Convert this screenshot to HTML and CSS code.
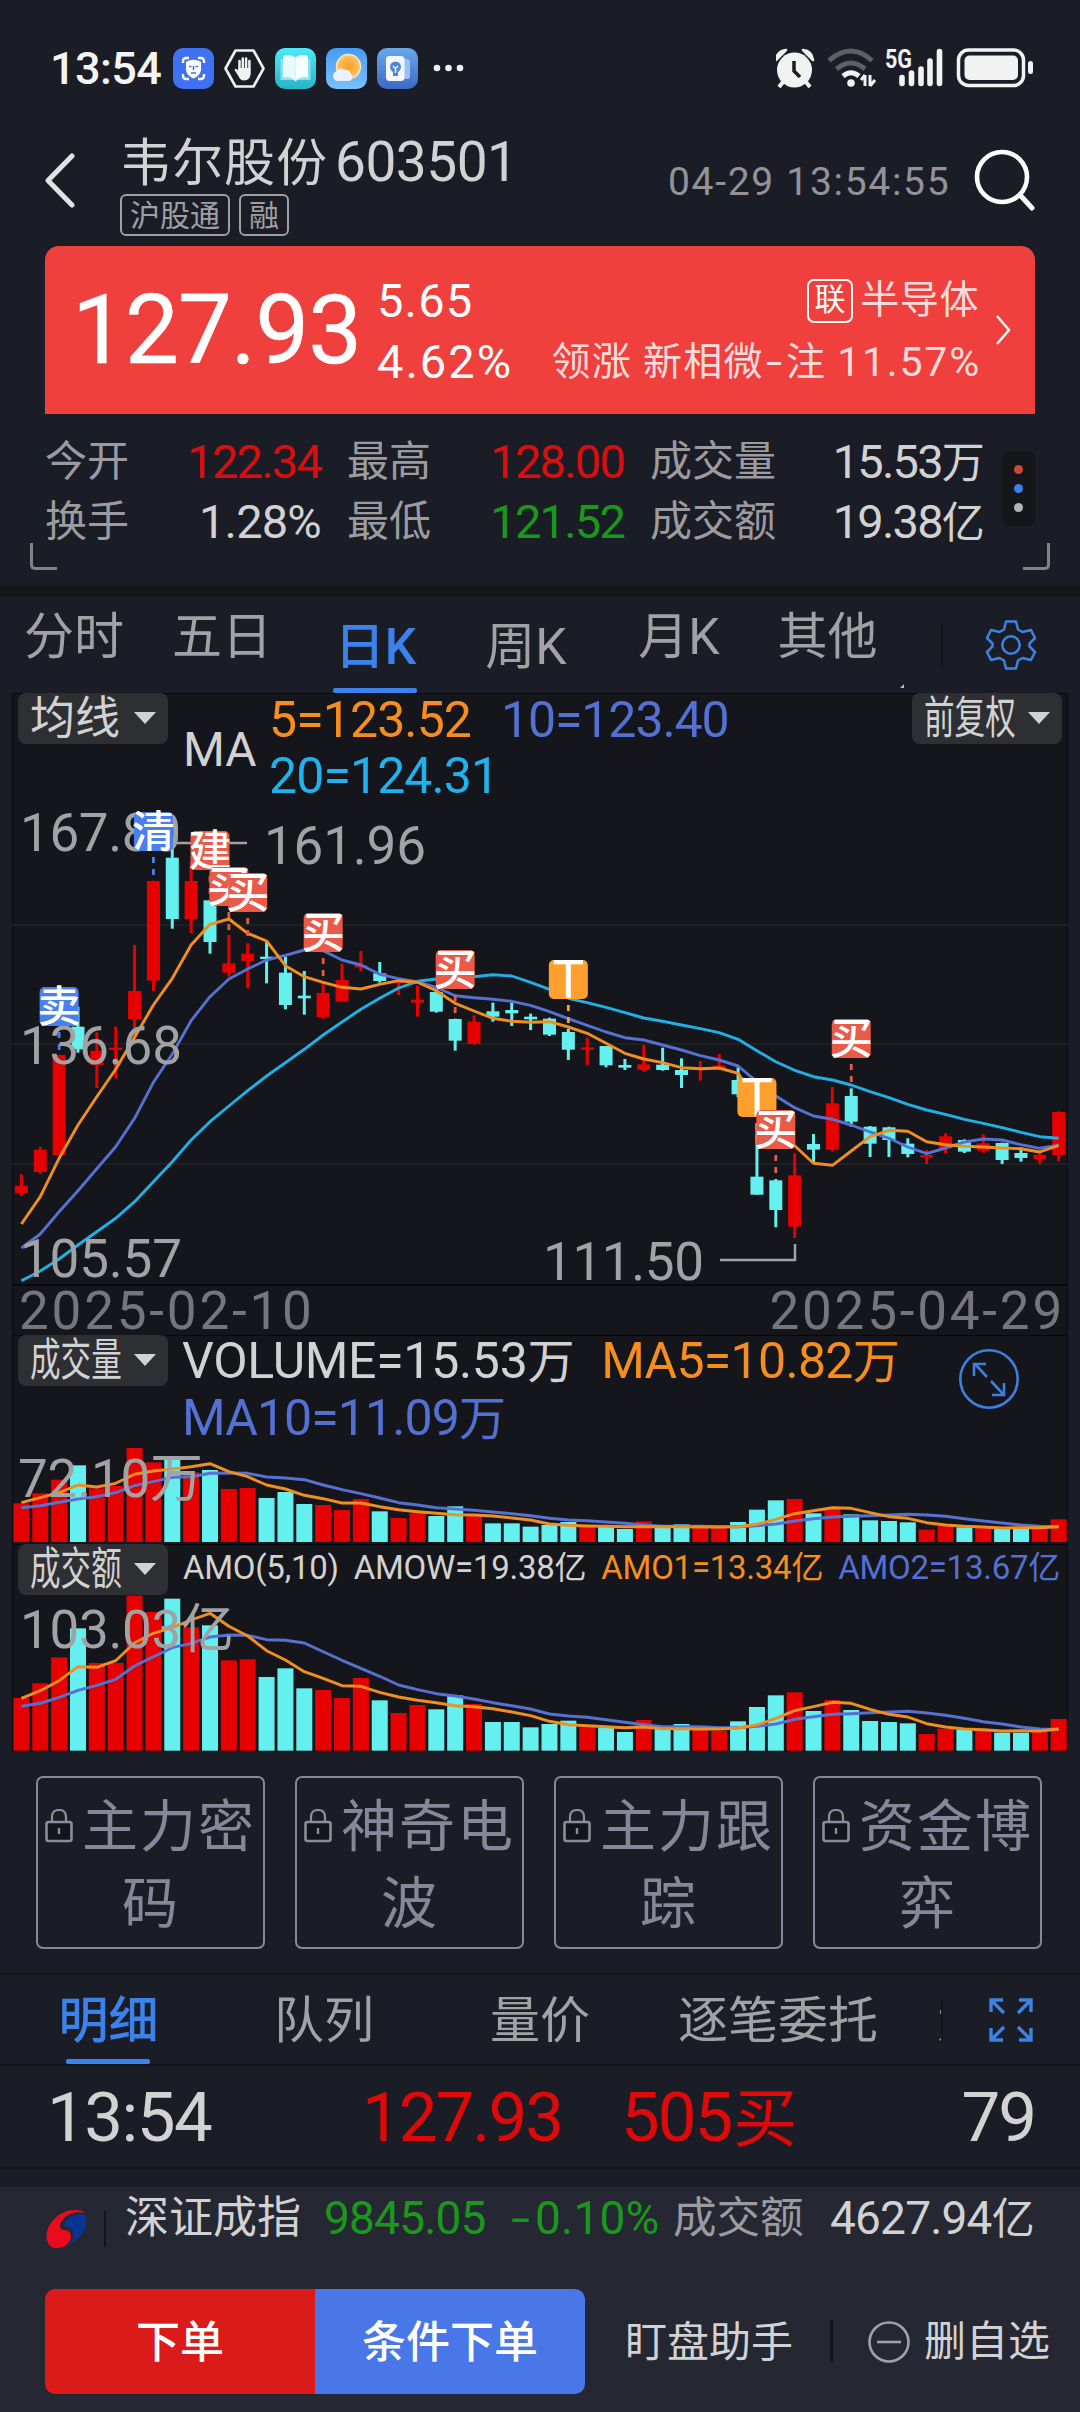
FILE: index.html
```html
<!DOCTYPE html>
<html lang="zh-CN">
<head>
<meta charset="utf-8">
<title>韦尔股份 603501</title>
<link rel="stylesheet" href="styles.css">
</head>
<body>
<div class="status">
  <span class="clock">13:54</span>
  <div class="apps">
    <svg viewBox="0 0 41 41"><rect width="41" height="41" rx="10" fill="#3f72f3"/><path d="M10 15v-2a3 3 0 0 1 3-3h3M25 10h3a3 3 0 0 1 3 3v2M31 26v2a3 3 0 0 1-3 3h-3M16 31h-3a3 3 0 0 1-3-3v-2" fill="none" stroke="#fff" stroke-width="2.4"/><path d="M13 14q7.500-4.500 15 0v8q-1 6-7.500 8.500q-6.500-2.500-7.500-8.500z" fill="#fff"/><path d="M16 18.500h2.500M22.500 18.500H25M20.500 18v4M18 25h5" stroke="#3f72f3" stroke-width="1.600"/></svg>
    <svg viewBox="0 0 41 41"><path d="M11.500 2.500h18L39.500 20.500 29.500 38.500h-18L1.500 20.500z" fill="none" stroke="#f2f2f2" stroke-width="2.600" stroke-linejoin="round"/><path d="M15.500 22V13M18.800 20V10.500M22.100 20V10.500M25.400 20V13" stroke="#f2f2f2" stroke-width="2.500" stroke-linecap="round"/><path d="M14.300 20h12.400v6q-1 6.500-6.500 6.500-4 0-5.500-4l-4.200-6.500q1-2.500 3.800.5z" fill="#f2f2f2"/></svg>
    <svg viewBox="0 0 41 41"><linearGradient id="gb" x2="0" y2="1"><stop stop-color="#4de9fa"/><stop offset="1" stop-color="#28b3c7"/></linearGradient><rect width="41" height="41" rx="10" fill="url(#gb)"/><path d="M5.500 11h30v21h-13l-2 2-2-2h-13z" fill="#8fe0ea"/><path d="M8 8q8-2.500 12.500 1.500V33Q16 28 8 29.500z" fill="#e6fbff"/><path d="M33 8q-8-2.500-12.500 1.500V33Q25 28 33 29.500z" fill="#f7ffff"/></svg>
    <svg viewBox="0 0 41 41"><linearGradient id="gw" x2="0" y2="1"><stop stop-color="#439cf5"/><stop offset="1" stop-color="#7cc0ff"/></linearGradient><radialGradient id="gs"><stop stop-color="#f89d22"/><stop offset="1" stop-color="#ffc768"/></radialGradient><rect width="41" height="41" rx="10" fill="url(#gw)"/><circle cx="22.500" cy="18.500" r="12" fill="url(#gs)" stroke="#ffe6bd" stroke-width="1.500"/><path d="M12 33a5 5 0 0 1-2-9.500 6 6 0 0 1 9-1.500 5.500 5.500 0 0 1 6 4 4 4 0 0 1-2 7z" fill="#eaf3ff"/></svg>
    <svg viewBox="0 0 41 41"><linearGradient id="gl" x2="0" y2="1"><stop stop-color="#68a9ea"/><stop offset="1" stop-color="#3c69c6"/></linearGradient><rect width="41" height="41" rx="10" fill="url(#gl)"/><path d="M27 11h3q3 0 3 3v14q0 3-3 3h-3z" fill="#9dc0ee"/><rect x="9" y="8" width="18.500" height="25" rx="3.500" fill="#f2f7ff"/><circle cx="18.500" cy="19" r="5.500" fill="#4f86d6"/><path d="M16 24h5v4h-5z" fill="#4f86d6"/><path d="M16 18l2.500 2.500L21 18M18.500 20.500V25" stroke="#f2f7ff" stroke-width="1.400" fill="none"/></svg>
  </div>
  <svg class="more" viewBox="0 0 32 8"><g fill="#eee"><circle cx="4" cy="4" r="3.300"/><circle cx="15.500" cy="4" r="3.300"/><circle cx="27" cy="4" r="3.300"/></g></svg>
  <svg class="signal" viewBox="776 47 258 42">
    <g fill="#f2f2f2"><circle cx="794.500" cy="70" r="17.500"/><path d="M776 60q1-9 10-10zM813 60q-1-9-10-10z" stroke="#f2f2f2" stroke-width="2.500" stroke-linejoin="round"/><path d="M783 82l-4 5M806 82l4 5" stroke="#f2f2f2" stroke-width="4"/></g>
    <path d="M794 61v10l6 6" fill="none" stroke="#1b1d26" stroke-width="3.500"/>
    <g fill="none" stroke-width="5"><path d="M829 60.500q22-19 43 0M836.500 69q14.500-12 28.500 0" stroke="#5e6067"/><path d="M843 76q8-6.500 16 0" stroke="#f2f2f2"/></g>
    <circle cx="851" cy="83" r="3.800" fill="#f2f2f2"/><path d="M865 75v11M870 75v11M865 75l-4 5M870 86l5-6" stroke="#f2f2f2" stroke-width="3" fill="none"/>
    <text x="885" y="67.500" textLength="27" lengthAdjust="spacingAndGlyphs" class="net">5G</text>
    <path d="M902 83.500v-6M911.500 83.500V73M921 83.500V69M930 83.500V61M939.500 83.500V51.500" stroke="#f2f2f2" stroke-width="5.600" stroke-linecap="round"/>
    <rect x="958.500" y="50" width="65" height="35.500" rx="10" fill="none" stroke="#f2f2f2" stroke-width="3.500"/><rect x="964.500" y="55.500" width="53.500" height="24.500" rx="5" fill="#f2f2f2"/><rect x="1028" y="61" width="5" height="13" rx="2.500" fill="#f2f2f2"/>
  </svg>
</div>

<header class="head">
  <svg class="back" viewBox="0 0 34 56"><path d="M28 4L4 28.500 28 53" fill="none" stroke="#e2e2e2" stroke-width="5" stroke-linecap="round" stroke-linejoin="round"/></svg>
  <div class="name">
    <h1>韦尔股份<span>603501</span></h1>
    <div class="tags"><span>沪股通</span><span>融</span></div>
  </div>
  <time>04-29 13:54:55</time>
  <svg class="search" viewBox="0 0 62 64"><circle cx="29" cy="29" r="25" fill="none" stroke="#fff" stroke-width="4.600"/><path d="M47 47l12 13" stroke="#fff" stroke-width="5" stroke-linecap="round"/></svg>
</header>

<section class="quote">
  <strong>127.93</strong>
  <div class="chg"><span>5.65</span><span class="pct">4.62%</span></div>
  <div class="sector">
    <div><b>联</b>半导体</div>
    <div class="lead">领涨 新相微<i>-</i>注 <em>11.57%</em></div>
  </div>
  <svg class="go" viewBox="0 0 16 32"><path d="M2 2l12 14L2 30" fill="none" stroke="#fff" stroke-width="2.400"/></svg>
</section>

<section class="stats">
  <div class="grid">
    <label>今开</label><span class="up">122.34</span><label>最高</label><span class="up">128.00</span><label>成交量</label><span>15.53<i>万</i></span>
    <label>换手</label><span class="wide">1.28%</span><label>最低</label><span class="down">121.52</span><label>成交额</label><span>19.38<i>亿</i></span>
  </div>
  <div class="dots"><i></i><i></i><i></i></div>
  <span class="corner left"></span><span class="corner right"></span>
</section>

<nav class="periods">
  <a>分时</a><a>五日</a><a class="low on">日K</a><a class="low">周K</a><a>月K</a><a class="other">其他</a>
  <svg class="gear" viewBox="-26 -26 52 52"><path d="M-5-23.500H5L7-15.500 11.500-13 20-15 24-7 18.500-1.500V1.500L24 7 20 15 11.500 13 7 15.500 5 23.500H-5L-7 15.500-11.500 13-20 15-24 7-18.500 1.500V-1.500L-24-7-20-15-11.500-13-7-15.500Z" fill="none" stroke="#3e82e4" stroke-width="2.500" stroke-linejoin="round"/><circle r="8.700" fill="none" stroke="#3e82e4" stroke-width="2.500"/></svg>
</nav>

<main class="charts">
  <section class="pane price">
    <svg class="plot" id="price" viewBox="12 693 1056 591" preserveAspectRatio="none"></svg>
    <div class="legend">
      <button>均线</button>
      <span class="ma">MA</span>
      <p><span class="c5">5=123.52</span><span class="c10">10=123.40</span><br><span class="c20">20=124.31</span></p>
      <button class="tight adj"><u>前复权</u></button>
    </div>
  </section>
  <div class="dates"><span>2025-02-10</span><span>2025-04-29</span></div>
  <section class="pane volume">
    <svg class="plot" id="volume" viewBox="12 1335 1056 209" preserveAspectRatio="none"></svg>
    <div class="legend">
      <button class="tight"><u>成交量</u></button>
      <p><span class="total">VOLUME=15.53<i>万</i></span><span class="c5">MA5=10.82<i>万</i></span><br><span class="c10">MA10=11.09<i>万</i></span></p>
      <svg class="expand" viewBox="-31 -31 62 62"><g fill="none" stroke="#3e7fdd" stroke-width="2.600"><circle r="28.700"/><path d="M-2-2L-14-15M-15-3V-15H-3M2 2L14 15M15 4V16H3"/></g></svg>
    </div>
  </section>
  <section class="pane amount">
    <svg class="plot" id="amount" viewBox="12 1544 1056 208" preserveAspectRatio="none"></svg>
    <div class="legend">
      <button class="tight"><u>成交额</u></button>
      <p><span>AMO(5,10)</span><span>AMOW=19.38<i>亿</i></span><span class="c5">AMO1=13.34<i>亿</i></span><span class="c10">AMO2=13.67<i>亿</i></span></p>
    </div>
  </section>
</main>

<div class="locks">
  <a><svg viewBox="0 0 28 34"><path d="M7 13V8q0-7 7-7t7 7v5" fill="none" stroke="#8b8d9e" stroke-width="2.200"/><rect x="1.500" y="13" width="25" height="19" rx="2" fill="#14151b" stroke="#8b8d9e" stroke-width="2.600"/><path d="M14 19v6" stroke="#8b8d9e" stroke-width="2.400"/></svg><span>主力密码</span></a>
  <a><svg viewBox="0 0 28 34"><path d="M7 13V8q0-7 7-7t7 7v5" fill="none" stroke="#8b8d9e" stroke-width="2.200"/><rect x="1.500" y="13" width="25" height="19" rx="2" fill="#14151b" stroke="#8b8d9e" stroke-width="2.600"/><path d="M14 19v6" stroke="#8b8d9e" stroke-width="2.400"/></svg><span>神奇电波</span></a>
  <a><svg viewBox="0 0 28 34"><path d="M7 13V8q0-7 7-7t7 7v5" fill="none" stroke="#8b8d9e" stroke-width="2.200"/><rect x="1.500" y="13" width="25" height="19" rx="2" fill="#14151b" stroke="#8b8d9e" stroke-width="2.600"/><path d="M14 19v6" stroke="#8b8d9e" stroke-width="2.400"/></svg><span>主力跟踪</span></a>
  <a><svg viewBox="0 0 28 34"><path d="M7 13V8q0-7 7-7t7 7v5" fill="none" stroke="#8b8d9e" stroke-width="2.200"/><rect x="1.500" y="13" width="25" height="19" rx="2" fill="#14151b" stroke="#8b8d9e" stroke-width="2.600"/><path d="M14 19v6" stroke="#8b8d9e" stroke-width="2.400"/></svg><span>资金博弈</span></a>
</div>

<nav class="detail">
  <a class="on">明细</a><a>队列</a><a>量价</a><a>逐笔委托</a><a class="cut">大单</a>
  <svg viewBox="0 0 44 44"><path d="M2 14V2H14M2 2L15 15M30 2H42V14M42 2L29 15M2 30V42H14M2 42L15 29M30 42H42V30M42 42L29 29" fill="none" stroke="#3e82e4" stroke-width="3.400"/></svg>
</nav>

<div class="tick"><span>13:54</span><span class="red">127.93</span><span class="red">505<i>买</i></span><span>79</span></div>

<footer>
  <div class="index">
    <svg viewBox="0 0 43 40"><path d="M2 31C-1 17 13 1 30 1q7 0 10 3C27 1 17 8 15 16q-1 5 5 5 6 1 6 7-2 11-15 11Q4 39 2 31z" fill="#ea0c1c"/><path d="M20 37q10-5 8-14-1-5-6-5-5-1-1-6Q28 4 38 5q5 3 3 11-4 15-21 21z" fill="#0a3494"/></svg>
    <b>深证成指</b><span class="down">9845.05</span><span class="down rate"><i>-</i>0.10%</span><label>成交额</label><span class="turn">4627.94<i>亿</i></span>
  </div>
  <div class="actions">
    <button class="buy">下单</button><button class="cond">条件下单</button>
    <a>盯盘助手</a>
    <a class="del"><svg viewBox="0 0 42 42"><circle cx="21" cy="21" r="19.500" fill="none" stroke="#a2a2a4" stroke-width="2.600"/><path d="M9 21h24" stroke="#a2a2a4" stroke-width="2.600"/></svg>删自选</a>
  </div>
</footer>
<script src="charts.js"></script>
</body>
</html>
```
FILE: styles.css
```css
* { box-sizing: border-box; margin: 0; padding: 0; }
body {
  width: 1080px; height: 2412px; overflow: hidden;
  background: #1b1d26; color: #d2d2d2;
  font-family: Roboto, "Noto Sans CJK SC", sans-serif;
  font-size: 42px; line-height: 1;
}
i, em { font-style: normal; }
u { text-decoration: none; }
svg { display: block; flex: none; }
button { border: 0; color: inherit; font: inherit; }
.up, .red { color: #d90f0f; }
.down { color: #1a981c; }

/* status bar */
.status { height: 136px; display: flex; align-items: center; padding: 0 46px 0 50px; }
.clock { width: 123px; color: #f4f4f4; font-size: 45px; font-weight: 500; letter-spacing: -.6px; }
.apps { display: flex; gap: 10px; }
.apps svg { width: 41px; height: 41px; }
.more { width: 32px; height: 8px; margin-left: 15px; }
.signal { width: 258px; height: 42px; margin-left: auto; }
.net { fill: #f2f2f2; font-size: 25px; font-weight: 700; }

/* title */
.head { height: 110px; display: flex; padding-left: 44px; }
.back { width: 34px; height: 56px; margin-top: 16px; }
.name { width: 590px; padding-left: 42px; }
.name h1 { height: 54px; line-height: 53px; font-size: 51px; font-weight: 400; letter-spacing: 1px; white-space: nowrap; }
.name h1 span { margin-left: 7px; font-size: 55px; letter-spacing: -.5px; }
.tags { display: flex; gap: 9px; margin-top: 4px; color: #a0a0a3; }
.tags span { height: 42px; padding: 0 8px; border: 2px solid #a0a0a3; border-radius: 6px; font-size: 30px; line-height: 39px; }
time { height: 44px; margin-top: 24px; width: 307px; line-height: 44px; font-size: 39px; letter-spacing: 1.7px; color: #939397; white-space: nowrap; }
.search { width: 62px; height: 64px; margin: 12px 0 0 -2px; }

/* red quote card */
.quote { height: 168px; margin: 0 45px; padding: 24px 0 0 27px; display: flex; border-radius: 14px 14px 0 0; background: #ef403d; color: #fff; }
.quote strong { width: 305px; height: 120px; line-height: 121px; font-size: 96px; font-weight: 400; letter-spacing: -1px; -webkit-text-stroke: .4px #fff; }
.chg { width: 132px; display: flex; flex-direction: column; font-size: 47px; line-height: 61px; letter-spacing: 1.2px; }
.pct { letter-spacing: 2px; }
.sector { width: 470px; display: flex; flex-direction: column; align-items: flex-end; font-size: 39px; line-height: 61px; color: #ffdcdb; white-space: nowrap; }
.sector div { display: flex; align-items: center; letter-spacing: .6px; white-space: pre; }
.sector b { width: 46px; height: 44px; margin-right: 7px; border: 2px solid #fff; border-radius: 7px; font-size: 31px; line-height: 38px; font-weight: 400; text-align: center; color: #fff; }
.sector .lead { letter-spacing: 1.3px; margin-top: 1px; }
.sector i { width: 22px; text-align: center; transform: scaleX(1.5); }
.sector em { font-size: 41px; letter-spacing: 1.8px; margin-right: -2px; }
.go { width: 16px; height: 32px; margin: 44px 0 0 16px; }

/* figures */
.stats { position: relative; height: 171px; padding: 17px 45px 0; display: flex; }
.grid { display: grid; grid-template-columns: 98px 179px 124px 179px 124px 235px; grid-auto-rows: 60px; line-height: 61px; width: 939px; }
.grid label { color: #9c9ca0; font-size: 42px; white-space: nowrap; }
.grid label:nth-of-type(3n+2), .grid label:nth-of-type(3n) { padding-left: 25px; }
.grid span { padding-right: 1px; text-align: right; font-size: 47px; letter-spacing: -1.8px; white-space: nowrap; }
.grid .wide { letter-spacing: -.8px; }
.grid i { font-size: 43px; }
.dots { width: 33px; height: 75px; margin-left: 18px; margin-top: 20px; padding: 14px 0; border-radius: 7px; background: #15161a; display: flex; flex-direction: column; align-items: center; justify-content: space-between; }
.dots i { width: 9px; height: 9px; border-radius: 50%; background: #cf4636; }
.dots i:nth-child(2) { background: #3b82ea; }
.dots i:nth-child(3) { background: #b4b4b4; }
.corner { position: absolute; bottom: 15px; width: 27px; height: 27px; border-bottom: 3px solid #838387; }
.corner.left { left: 30px; border-left: 3px solid #838387; border-bottom-left-radius: 5px; }
.corner.right { right: 30px; border-right: 3px solid #838387; border-bottom-right-radius: 5px; }

/* period tabs */
.periods { position: relative; height: 108px; border-top: 12px solid #15161a; display: grid; grid-template-columns: 149px 147px 167px 128px 177px 134px 40px 1fr; font-size: 50px; line-height: 56px; color: #a2a2a4; }
.periods a { padding: 12px 1px 0 0; text-align: center; position: relative; }
.periods .low { padding: 22px 2px 0 0; }
.periods .on { padding-right: 8px; color: #3b82ea; font-weight: 500; }
.periods .on::after { content: ""; position: absolute; left: 37px; bottom: 0; width: 84px; height: 5px; border-radius: 2px; background: #3b82ea; }
.periods .other { padding-right: 15px; }
.periods .other::after { content: ""; position: absolute; right: -2px; bottom: 5px; border: 2px solid; border-color: transparent #bbb #bbb transparent; }
.gear { grid-column: 8; width: 52px; height: 52px; margin: 22px 0 0 43px; }
.periods::after { content: ""; position: absolute; left: 941px; top: 25px; width: 2px; height: 46px; background: #14151a; }

/* charts */
.charts { width: 1056px; margin: 0 12px; background: #15161b; box-shadow: inset 1px 0 #0a0b0e, inset -1px 0 #0a0b0e; }
.pane { position: relative; box-shadow: inset 0 1px #08090b; }
.price { height: 591px; }
.volume { height: 209px; }
.amount { height: 208px; }
.plot { position: absolute; left: 0; top: 0; width: 100%; height: 100%; }
.plot text { font-size: 53px; fill: #a2a2a5; }
.plot .flag { font-size: 43px; font-weight: 500; fill: #fff; text-anchor: middle; }
.plot .flag-t { font-size: 53px; fill: #fff; text-anchor: middle; }
.legend { position: relative; display: flex; align-items: flex-start; padding: 0 6px; font-size: 50px; }
.legend button { position: relative; flex: none; width: 150px; height: 51px; padding-left: 12px; text-align: left; border-radius: 8px; background: #2e2f33; font-size: 45px; line-height: 51px; }
.legend button::after { content: ""; position: absolute; right: 12px; top: 19px; border: 11.500px solid transparent; border-top: 12px solid #d2d2d2; border-bottom: 0; }
.legend .tight u { display: inline-block; transform: scaleX(.68); transform-origin: 0 50%; white-space: nowrap; }
.ma { width: 86px; margin: 29px 0 0 15px; font-size: 48px; line-height: 56px; }
.legend p { line-height: 56px; white-space: nowrap; flex: none; }
.legend p span { margin-right: 31px; }
.price p { width: 643px; margin-top: -1px; letter-spacing: -.9px; }
.price .c10 { margin-left: -1px; letter-spacing: -1.1px; }
.volume p { width: 776px; margin: -2px 0 0 14px; }
.volume .total { margin-right: 27px; letter-spacing: -.3px; }
.volume .c5 { letter-spacing: -.7px; }
.volume .c10 { letter-spacing: -.9px; }
.legend i { font-size: 47px; }
.amount p { margin-left: 15px; font-size: 33px; line-height: 47px; letter-spacing: -.25px; }
.amount p span { margin-right: 15px; }
.amount .legend i { font-size: 32px; }
.expand { width: 62px; height: 62px; margin-top: 13px; }
.c5 { color: #f68e1e; }
.c10 { color: #5470d2; }
.c20 { color: #20b2ec; }
.dates { height: 51px; padding: 0 3px 0 7px; display: flex; justify-content: space-between; border-top: 2px solid #08090b; font-size: 53px; line-height: 50px; letter-spacing: 2.8px; color: #76767a; }

/* locked indicators */
.locks { margin: 24px 37px 0 36px; display: flex; gap: 30px; }
.locks a { position: relative; width: 229px; height: 173px; padding: 11px 6px 0; border: 2px solid #86889a; border-radius: 7px; color: #86889a; font-size: 56px; line-height: 77px; letter-spacing: 2px; text-align: center; text-indent: 36px; overflow: hidden; }
.locks svg { position: absolute; left: 7px; top: 31px; width: 28px; height: 34px; }
.locks span { display: block; width: 214px; word-break: break-all; }

/* details */
.detail { position: relative; height: 93px; margin-top: 24px; border-top: 2px solid #14151a; border-bottom: 2px solid #14151a; display: grid; grid-template-columns: 217px 214px 218px 258px 36px 1fr; font-size: 50px; line-height: 92px; text-align: center; color: #a2a2a4; }
.detail a { position: relative; height: 89px; }
.detail .on { color: #3b82ea; font-weight: 500; }
.detail .on::after { content: ""; position: absolute; left: 66px; bottom: 0; width: 84px; height: 5px; border-radius: 2px; background: #3b82ea; }
.detail .cut { overflow: hidden; text-indent: 30px; text-align: left; white-space: nowrap; }
.detail .cut::after { content: ""; position: absolute; right: 0; top: 22px; width: 2px; height: 46px; background: #14151a; }
.detail svg { width: 44px; height: 44px; margin: 23px 0 0 46px; }
.tick { height: 103px; padding: 0 45px 0 47px; border-bottom: 2px solid #14151a; display: flex; font-size: 69px; line-height: 104px; letter-spacing: -2px; }
.tick span:nth-child(1) { width: 315px; letter-spacing: -1.5px; }
.tick span:nth-child(2) { width: 259px; }
.tick span:nth-child(4) { margin-left: auto; }
.tick i { margin-left: 2px; font-size: 64px; }
.red { color: #de0a0a; }

/* bottom bar */
footer { height: 225px; margin-top: 18px; background: #252733; }
.index { height: 102px; padding: 0 45px; display: flex; line-height: 63px; white-space: nowrap; }
.index svg { width: 43px; height: 40px; margin-top: 22px; }
.index b { position: relative; width: 199px; margin-left: 37px; font-size: 44px; font-weight: 400; }
.index b::before { content: ""; position: absolute; left: -21px; top: 24px; width: 2px; height: 36px; background: #14151a; }
.index span { width: 187px; font-size: 46px; letter-spacing: -.8px; }
.index .rate { width: 162px; letter-spacing: .2px; }
.rate i { display: inline-block; width: 24px; transform: scaleX(1.5); transform-origin: 0 50%; }
.index label { width: 157px; color: #9c9ca0; font-size: 43.500px; }
.turn i { font-size: 43px; }
.index .turn { letter-spacing: -.8px; }
.actions { height: 105px; padding: 0 30px 0 45px; display: flex; line-height: 108px; font-size: 42px; }
.actions button { width: 270px; color: #fff; font-size: 44px; font-weight: 500; }
.buy { border-radius: 10px 0 0 10px; background: #db1a1a; }
.cond { border-radius: 0 10px 10px 0; background: #4a77e8; }
.actions a { width: 248px; padding-left: 40px; position: relative; white-space: nowrap; }
.actions a:not(.del)::after { content: ""; position: absolute; right: 0; top: 31px; width: 3px; height: 42px; background: #14151a; }
.actions .del { width: 217px; display: flex; align-items: center; gap: 14px; padding-left: 35px; }
.del svg { width: 42px; height: 42px; }
```
FILE: charts.js
```js
const UP = '#e60000', DOWN = '#64f0ee';
const ORANGE = '#f08f20', BLUE = '#5671d2', CYAN = '#20b0e6';
const x = i => 21.4 + i * 18.86;

// high, body top, body bottom, low, in thirds of a pixel below y = 780; 1 = rising day
const days = [
  [1183,1217,1239,1248,1],[1101,1109,1176,1182,1],[825,825,1126,1126,1],[680,740,808,818,0],
  [757,812,855,924,1],[740,803,810,895,1],[495,633,717,770,1],[302,303,602,633,1],
  [190,233,417,446,0],[245,303,418,459,1],[361,361,486,521,0],[465,550,578,590,1],
  [490,521,543,625,1],[485,530,537,610,0],[530,578,675,688,0],[573,647,655,704,0],
  [610,639,712,716,1],[551,600,665,665,1],[513,555,562,573,1],[546,580,603,608,0],
  [600,601,609,645,1],[617,659,668,710,1],[625,636,695,698,0],[716,717,782,812,0],
  [706,725,792,794,1],[668,694,710,725,0],[668,690,700,738,0],[701,710,718,750,0],
  [713,716,764,768,0],[747,756,809,840,0],[773,802,809,855,1],[798,798,856,862,0],
  [837,855,863,870,0],[795,853,870,875,1],[803,854,870,872,0],[835,870,885,924,0],
  [843,862,869,902,1],[822,857,865,868,1],[862,900,943,952,0],[1030,1190,1244,1244,0],
  [1197,1201,1290,1342,0],[1120,1186,1340,1374,1],[1062,1092,1109,1148,0],[921,970,1109,1115,1],
  [925,948,1025,1040,0],[1038,1040,1091,1131,0],[1040,1042,1080,1131,0],[1075,1091,1122,1132,0],
  [1110,1125,1132,1152,1],[1060,1069,1105,1120,1],[1078,1080,1115,1119,0],[1063,1090,1112,1118,1],
  [1088,1089,1140,1152,0],[1103,1119,1134,1145,0],[1110,1125,1137,1152,1],[994,996,1125,1143,1]];
const ma5 = [1332,1250,1135,1035,950,868,772,675,595,495,433,417,460,483,557,590,607,622,627,613,602,607,632,670,693,715,724,727,725,741,760,790,820,837,848,863,866,864,880,960,1040,1097,1150,1156,1113,1070,1051,1054,1085,1094,1099,1101,1104,1106,1116,1096];
const ma10 = [1404,1362,1295,1232,1166,1100,1015,907,822,722,650,597,567,540,526,510,512,540,555,583,596,606,622,647,653,658,664,676,695,716,736,756,773,780,795,810,827,840,858,905,948,983,1008,1018,1035,1056,1075,1101,1121,1104,1086,1077,1080,1094,1105,1096];
const ma20 = [1502,1473,1437,1395,1355,1315,1265,1205,1145,1080,1025,978,932,888,848,808,765,726,688,655,624,604,597,595,590,584,588,607,628,655,668,682,698,714,724,735,746,758,778,812,845,871,890,900,915,935,953,973,990,1003,1018,1030,1043,1057,1070,1075];

// volume and turnover, thirds of a pixel below y = 1270
const vol = [700,670,629,586,655,648,534,577,561,607,600,657,654,684,666,702,705,720,687,724,744,730,738,709,733,760,760,770,765,756,770,770,777,754,773,763,773,773,756,719,691,687,730,714,733,751,753,757,779,768,772,773,777,776,775,748];
const vol5 = [698,683,668,645,651,640,613,603,597,590,581,605,620,645,657,676,686,699,699,710,719,725,730,734,735,738,744,750,762,766,768,769,770,770,770,770,771,771,770,763,748,731,722,713,715,728,740,745,758,765,769,771,774,773,773,770];
const vol10 = [713,707,697,687,680,668,647,635,622,620,610,609,610,621,624,629,645,659,671,684,698,705,713,717,721,726,731,737,745,750,752,756,760,765,769,769,769,770,770,767,762,753,746,741,739,737,735,733,735,739,746,753,759,765,769,770];
const amo = [1284,1240,1162,1075,1179,1179,977,1026,986,1072,1066,1171,1168,1221,1195,1255,1260,1284,1224,1291,1329,1305,1318,1276,1302,1356,1356,1372,1362,1352,1372,1374,1386,1350,1376,1362,1376,1382,1354,1311,1276,1267,1323,1290,1320,1353,1356,1360,1392,1376,1380,1380,1388,1388,1386,1347];
const amo5 = [1285,1262,1232,1190,1192,1172,1118,1090,1073,1050,1030,1069,1098,1142,1170,1205,1225,1247,1249,1267,1281,1291,1298,1307,1310,1316,1326,1337,1354,1364,1367,1370,1373,1371,1376,1376,1377,1377,1374,1365,1345,1322,1310,1297,1300,1318,1333,1341,1361,1371,1377,1379,1383,1382,1383,1377];
const amo10 = [1309,1300,1282,1261,1246,1228,1188,1160,1133,1120,1101,1095,1096,1109,1111,1119,1145,1171,1195,1219,1245,1259,1271,1278,1287,1298,1307,1317,1332,1338,1342,1349,1357,1364,1370,1370,1370,1373,1373,1369,1362,1348,1340,1333,1331,1328,1326,1324,1329,1336,1345,1355,1362,1371,1377,1378];

const rect = (l, t, w, h, fill, r = 0) => `<rect x="${l}" y="${t}" width="${w}" height="${h}" fill="${fill}" rx="${r}"/>`;
const line = (vals, y0, color) => `<polyline points="${vals.map((v, i) => x(i).toFixed(1) + ',' + (y0 + v / 3).toFixed(1)).join(' ')}" fill="none" stroke="${color}" stroke-width="2.9" stroke-linejoin="round"/>`;
const label = (s, l, base, w) => `<text x="${l}" y="${base}" textLength="${w}">${s}</text>`;

let p = [925, 1044, 1164].map(y => rect(12, y - .75, 1056, 1.5, '#222429')).join('');
p += '<path d="M168 843H247M795 1244V1260H720" fill="none" stroke="#a2a2a5" stroke-width="2.5"/>';
days.forEach(([h, t, b, l, up], i) => {
  const c = up ? UP : DOWN;
  p += rect(x(i) - 1.5, 780 + h / 3, 3, (l - h) / 3, c) + rect(x(i) - 6.5, 780 + t / 3, 13, (b - t) / 3, c);
});
p += line(ma20, 780, CYAN) + line(ma10, 780, BLUE) + line(ma5, 780, ORANGE);

// trade flags: day, top, caption, colour
const flags = [[2,987,'卖','#4b7ff0'],[7,812,'清','#4b7ff0'],[10,831,'建','#ea5a48'],[11,867,'买','#ea5a48'],[12,873,'买','#ea5a48'],
  [16,913,'买','#ea5a48'],[23,950,'买','#ea5a48'],[29,960,'T','#ff9f2e'],[39,1078,'T','#ff9f2e'],[40,1110,'买','#ea5a48'],[44,1019,'买','#ea5a48']];
flags.forEach(([i, y, , c]) => { p += rect(x(i) - 1.4, y + 45, 2.8, 6, c) + rect(x(i) - 1.4, y + 57, 2.8, 6, c); });
p += label('167.80', 20, 851, 161) + label('161.96', 264, 864, 162) + label('136.68', 20, 1064, 162) +
  label('105.57', 20, 1277, 162) + label('111.50', 543, 1280, 161);
flags.forEach(([i, y, s, c]) => {
  p += rect(x(i) - 19.5, y, 39, 39, c, 5);
  p += s === 'T' ? `<text class="flag-t" x="${x(i)}" y="${y + 38}">T</text>` : `<text class="flag" x="${x(i)}" y="${y + 35}">${s}</text>`;
});
document.getElementById('price').innerHTML = p;

function bars(id, tops, a5, a10, base, text) {
  const body = tops.map((t, i) => rect(x(i) - 8, 1270 + t / 3, 16, (base - t) / 3, days[i][4] ? UP : DOWN)).join('');
  document.getElementById(id).innerHTML = body + line(a10, 1270, BLUE) + line(a5, 1270, ORANGE) + text;
}
bars('volume', vol, vol5, vol10, 816, label('72.10万', 18, 1497, 185));
bars('amount', amo, amo5, amo10, 1442, label('103.03亿', 20, 1648, 214));
```
